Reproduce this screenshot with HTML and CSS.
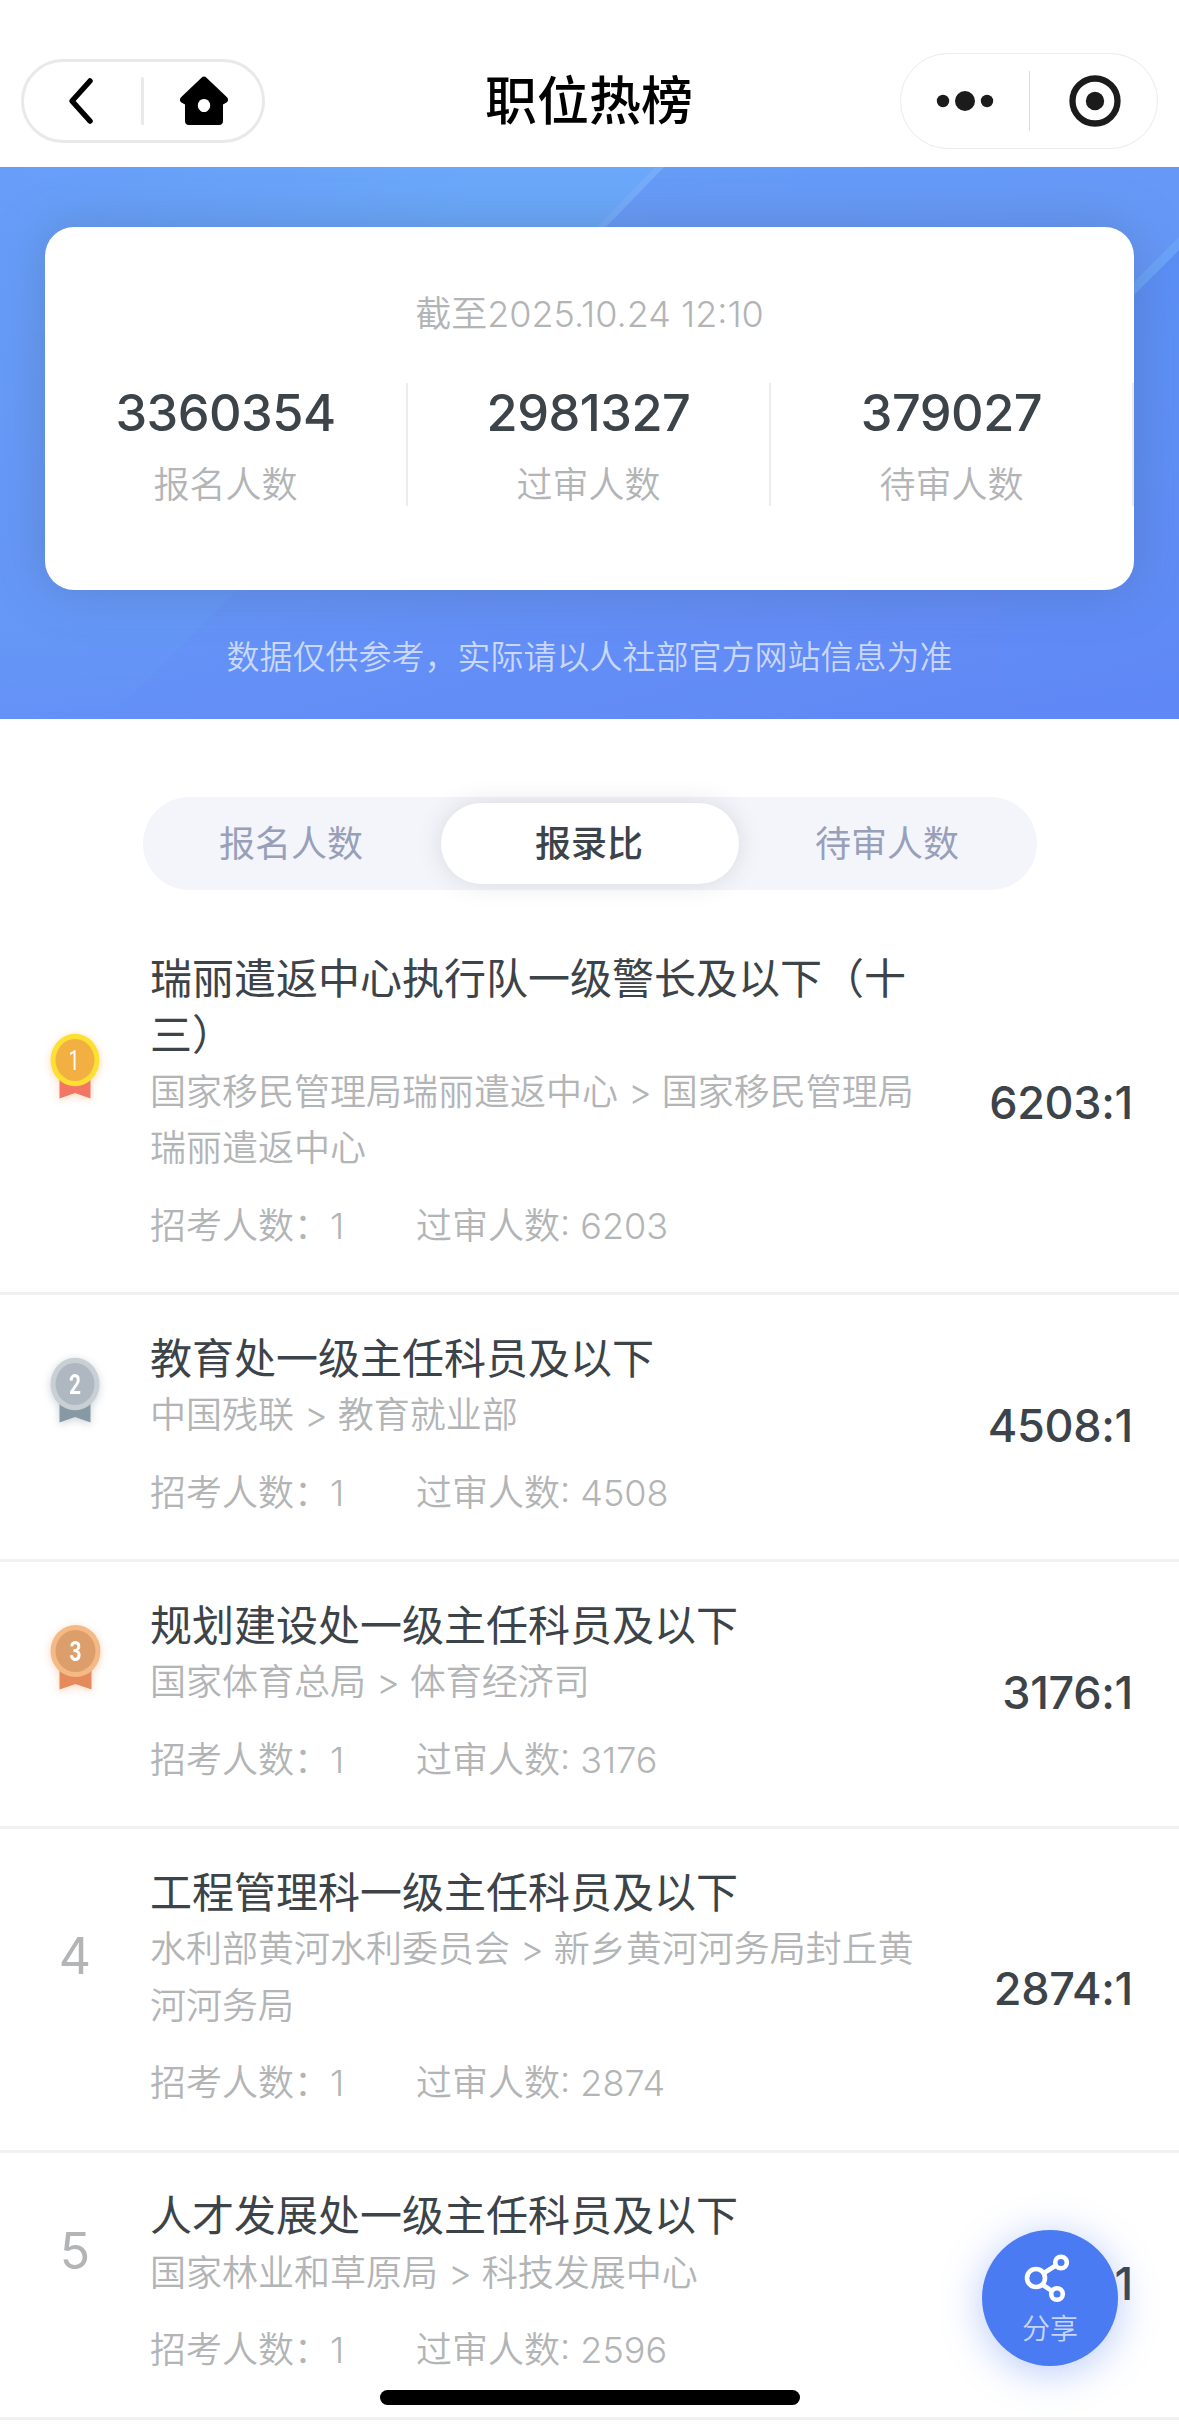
FILE: index.html
```html
<!DOCTYPE html>
<html lang="zh-CN">
<head>
<meta charset="utf-8">
<title>职位热榜</title>
<link rel="stylesheet" href="styles.css">
</head>
<body>
<header class="nav">
  <div class="capsule capsule-left">
    <svg width="32" height="52" viewBox="0 0 32 52"><path d="M26 6 8 26l18 20" fill="none" stroke="#000" stroke-width="5.5" stroke-linecap="round" stroke-linejoin="round"/></svg>
    <i class="rule"></i>
    <svg width="50" height="50" viewBox="0 0 50 50"><path fill-rule="evenodd" d="M22.5 1.8a3.5 3.5 0 0 1 5 0L48 21.3c1.6 1.6 1.3 4.2-.5 5.2L44 28.500V45a4 4 0 0 1-4 4H10a4 4 0 0 1-4-4V28.500l-3.500-2C.700 25.500.400 22.900 2 21.300ZM25 23a6.200 6.500 0 1 0 .01 0Z"/></svg>
  </div>
  <h1>职位热榜</h1>
  <div class="capsule capsule-right">
    <svg width="60" height="24" viewBox="0 0 60 24" fill="#1b1b1b"><circle cx="8" cy="12" r="6.200"/><circle cx="30" cy="12" r="10"/><circle cx="52" cy="12" r="6.200"/></svg>
    <i class="rule"></i>
    <svg width="54" height="54" viewBox="0 0 54 54"><circle cx="27" cy="27" r="22.500" fill="none" stroke="#1b1b1b" stroke-width="6.300"/><circle cx="27" cy="27" r="9.200" fill="#1b1b1b"/></svg>
  </div>
</header>

<section class="hero">
  <svg class="hero-art" viewBox="0 0 1179 552" preserveAspectRatio="none">
    <defs>
      <linearGradient id="fade" x1="0" y1="0" x2="1" y2="0"><stop offset="0" stop-color="#6ba8fa" stop-opacity="0"/><stop offset=".7" stop-color="#6ba8fa"/></linearGradient>
      <linearGradient id="side" x1="0" y1="0" x2="0" y2="1"><stop offset="0" stop-color="#5b8ef5"/><stop offset="1" stop-color="#5b8ef5" stop-opacity="0"/></linearGradient>
      <linearGradient id="corner" x1="0" y1="0" x2="0" y2="1"><stop offset="0" stop-color="#6598f7" stop-opacity="0"/><stop offset=".6" stop-color="#6598f7"/><stop offset="1" stop-color="#6598f7" stop-opacity="0"/></linearGradient>
    </defs>
    <path d="M0 0H664L500 164H0Z" fill="url(#fade)"/>
    <path d="M655 0h9L500 170h-9Z" fill="#76acfa"/>
    <path d="M1179 76v476h-180V256Z" fill="url(#side)"/>
    <path d="M1179 70v13l-84 84h-13Z" fill="#6aa3f9"/>
    <path d="M0 260h400L108 552H0Z" fill="url(#corner)"/>
  </svg>
  <div class="card">
    <p class="asof">截至2025.10.24 12:10</p>
    <div class="stats">
      <div class="stat"><b>3360354</b><span>报名人数</span></div>
      <div class="stat"><b>2981327</b><span>过审人数</span></div>
      <div class="stat"><b>379027</b><span>待审人数</span></div>
    </div>
  </div>
  <p class="note">数据仅供参考，实际请以人社部官方网站信息为准</p>
</section>

<nav class="tabs">
  <span class="tab">报名人数</span>
  <span class="tab active">报录比</span>
  <span class="tab">待审人数</span>
</nav>

<main class="list">
  <article class="row">
    <div class="rank">
      <svg class="medal gold" viewBox="0 0 60 74"><path class="ribbon" d="M14.500 44h31v23.500L30 62l-15.500 5.500Z"/><ellipse class="rim" cx="30" cy="29" rx="24.500" ry="26.300"/><ellipse class="face" cx="30" cy="29" rx="19.500" ry="21"/><text x="29" y="39" textLength="11" lengthAdjust="spacingAndGlyphs">1</text></svg>
    </div>
    <div class="info"><h2>瑞丽遣返中心执行队一级警长及以下（十三）</h2><p>国家移民管理局瑞丽遣返中心 &gt; 国家移民管理局瑞丽遣返中心</p><div class="meta"><span>招考人数：1</span><span>过审人数: 6203</span></div></div>
    <div class="ratio">6203:1</div>
  </article>
  <article class="row">
    <div class="rank">
      <svg class="medal silver" viewBox="0 0 60 74"><path class="ribbon" d="M14.500 44h31v23.500L30 62l-15.500 5.500Z"/><ellipse class="rim" cx="30" cy="29" rx="24.500" ry="26.300"/><ellipse class="face" cx="30" cy="29" rx="19.500" ry="21"/><text x="30" y="39" textLength="12" lengthAdjust="spacingAndGlyphs">2</text></svg>
    </div>
    <div class="info"><h2>教育处一级主任科员及以下</h2><p>中国残联 &gt; 教育就业部</p><div class="meta"><span>招考人数：1</span><span>过审人数: 4508</span></div></div>
    <div class="ratio">4508:1</div>
  </article>
  <article class="row">
    <div class="rank">
      <svg class="medal bronze" viewBox="0 0 60 74"><path class="ribbon" d="M14.500 44h32v23.500L30.500 62l-16 5.500Z"/><ellipse class="rim" cx="30.500" cy="29" rx="25" ry="26"/><ellipse class="face" cx="30.500" cy="29" rx="20" ry="21"/><text x="30.500" y="39" textLength="12" lengthAdjust="spacingAndGlyphs">3</text></svg>
    </div>
    <div class="info"><h2>规划建设处一级主任科员及以下</h2><p>国家体育总局 &gt; 体育经济司</p><div class="meta"><span>招考人数：1</span><span>过审人数: 3176</span></div></div>
    <div class="ratio">3176:1</div>
  </article>
  <article class="row">
    <div class="rank"><span class="num">4</span></div>
    <div class="info"><h2>工程管理科一级主任科员及以下</h2><p>水利部黄河水利委员会 &gt; 新乡黄河河务局封丘黄河河务局</p><div class="meta"><span>招考人数：1</span><span>过审人数: 2874</span></div></div>
    <div class="ratio">2874:1</div>
  </article>
  <article class="row">
    <div class="rank"><span class="num">5</span></div>
    <div class="info"><h2>人才发展处一级主任科员及以下</h2><p>国家林业和草原局 &gt; 科技发展中心</p><div class="meta"><span>招考人数：1</span><span>过审人数: 2596</span></div></div>
    <div class="ratio">2596:1</div>
  </article>
</main>

<div class="share">
  <svg width="46" height="50" viewBox="0 0 46 50" fill="none" stroke="#fff" stroke-width="4.600"><path d="M21 20 32 13M20 32l9 6"/><circle cx="13" cy="25" r="9"/><circle cx="38" cy="9.500" r="5.800"/><circle cx="34" cy="41" r="5.800"/></svg>
  <span>分享</span>
</div>
<div class="home-bar"></div>
</body>
</html>
```
FILE: styles.css
```css
* { box-sizing: border-box; }
body {
  margin: 0;
  width: 1179px;
  height: 2429px;
  position: relative;
  overflow: hidden;
  background: #fff;
  color: #3c4349;
  font-family: Inter, "Noto Sans CJK SC", sans-serif;
}
h1, h2, p { margin: 0; font-weight: 400; }
svg { display: block; flex: none; }

.nav {
  height: 167px;
  padding: 35px 21px 0;
  display: grid;
  grid-template-columns: 258px 1fr 258px;
  align-items: center;
}
.nav h1 {
  padding-top: 2px;
  text-align: center;
  text-indent: -1px;
  font-size: 52px;
  line-height: 72px;
  font-weight: 500;
  color: #000;
}
.capsule { display: flex; align-items: center; }
.capsule-left {
  width: 244px;
  height: 84px;
  border: 3px solid #e9e9e9;
  border-radius: 42px;
  padding-left: 40px;
}
.capsule-left .rule { width: 3px; height: 48px; margin: 0 35px 0 45px; background: #e9e9e9; border-radius: 2px; }
.capsule-left svg:last-child { margin-top: -1px; }
.capsule-right {
  height: 96px;
  border: 1px solid #ebebeb;
  border-radius: 48px;
  padding-left: 34px;
}
.capsule-right .rule { width: 1px; height: 60px; margin: 0 38px 0 34px; background: #dcdcdc; }

.hero {
  position: relative;
  height: 552px;
  padding: 60px 45px 0;
  background: linear-gradient(165deg, #679ef9 0%, #6699f7 40%, #638df6 75%, #5f87f5 100%);
}
.hero-art { position: absolute; left: 0; top: 0; width: 100%; height: 100%; }
.card {
  position: relative;
  height: 363px;
  padding-top: 59px;
  border-radius: 29px;
  background: #fff;
  box-shadow: 0 0 50px rgba(70, 95, 140, .35);
}
.asof { text-align: center; font-size: 36px; line-height: 56px; color: #b2b4b6; font-weight: 350; }
.stats { display: grid; grid-template-columns: repeat(3, 1fr); margin-top: 41px; }
.stat {
  height: 123px;
  display: flex;
  flex-direction: column;
  align-items: center;
  border-right: 2px solid #ededee;
}
.stat b { font-size: 50.500px; line-height: 60px; font-weight: 500; letter-spacing: -.5px; }
.stat span { font-size: 36px; line-height: 56px; margin-top: 14px; color: #b2b4b6; font-weight: 350; }
.note {
  position: relative;
  margin-top: 43px;
  text-align: center;
  font-size: 33px;
  line-height: 48px;
  font-weight: 350;
  color: rgba(255, 255, 255, .66);
}

.tabs {
  width: 894px;
  height: 93px;
  margin: 78px 0 25px 143px;
  padding: 6px 0;
  display: grid;
  grid-template-columns: repeat(3, 1fr);
  border-radius: 47px;
  background: #f4f5fa;
}
.tab {
  display: flex;
  align-items: center;
  justify-content: center;
  font-size: 36px;
  color: #98a0b9;
  padding: 0 2px 6px 0;
}
.tab.active {
  border-radius: 41px;
  background: #fff;
  color: #3c4349;
  font-weight: 500;
  box-shadow: 0 0 24px rgba(60, 66, 80, .15);
}

.row {
  display: grid;
  grid-template-columns: 150px 776px 1fr;
  align-items: center;
  padding: 35.500px 46px 38px 0;
  border-bottom: 3px solid #f1f1f2;
}
.rank { display: flex; justify-content: center; padding-bottom: 68px; }
.medal { width: 60px; height: 74px; overflow: visible; }
.medal text { font: 700 28px Roboto, sans-serif; fill: #fff; text-anchor: middle; }
.gold text { font-weight: 400; }
.gold { filter: drop-shadow(0 2px 4px rgba(255, 150, 60, .35)); }
.silver { filter: drop-shadow(0 2px 4px rgba(90, 110, 130, .3)); }
.bronze { filter: drop-shadow(0 2px 4px rgba(235, 140, 80, .35)); }
.gold .ribbon { fill: #f37564; }
.gold .rim { fill: #fde031; }
.gold .face { fill: #f2b042; }
.silver .ribbon { fill: #8799a4; }
.silver .rim { fill: #c8cfd5; }
.silver .face { fill: #afb7c1; }
.bronze .ribbon { fill: #e58a5c; }
.bronze .rim { fill: #f5b985; }
.bronze .face { fill: #dc9e6a; }
.num { font-size: 50px; line-height: 60px; color: #b2b4b6; }
.rank:has(.num) { padding-bottom: 64px; }

.info h2 { font-size: 42px; line-height: 56.500px; }
.info p { font-size: 36px; line-height: 56.500px; color: #b2b4b6; font-weight: 350; }
.meta { display: flex; margin-top: 21px; font-size: 36px; line-height: 56.500px; color: #b2b4b6; font-weight: 350; }
.meta span:first-child { width: 266px; }
.ratio { text-align: right; font-size: 45px; font-weight: 500; letter-spacing: -.3px; white-space: nowrap; }

.share {
  position: absolute;
  left: 982px;
  top: 2230px;
  width: 136px;
  height: 136px;
  padding-top: 23px;
  display: flex;
  flex-direction: column;
  align-items: center;
  border-radius: 50%;
  background: #4b7bf3;
  box-shadow: 0 6px 40px rgba(75, 123, 243, .4);
}
.share svg { margin-right: 8px; }
.share span { margin-top: 6px; font-size: 28px; line-height: 40px; font-weight: 350; color: rgba(255, 255, 255, .7); }
.home-bar {
  position: absolute;
  left: 380px;
  top: 2390px;
  width: 420px;
  height: 15px;
  border-radius: 8px;
  background: #000;
}
```
